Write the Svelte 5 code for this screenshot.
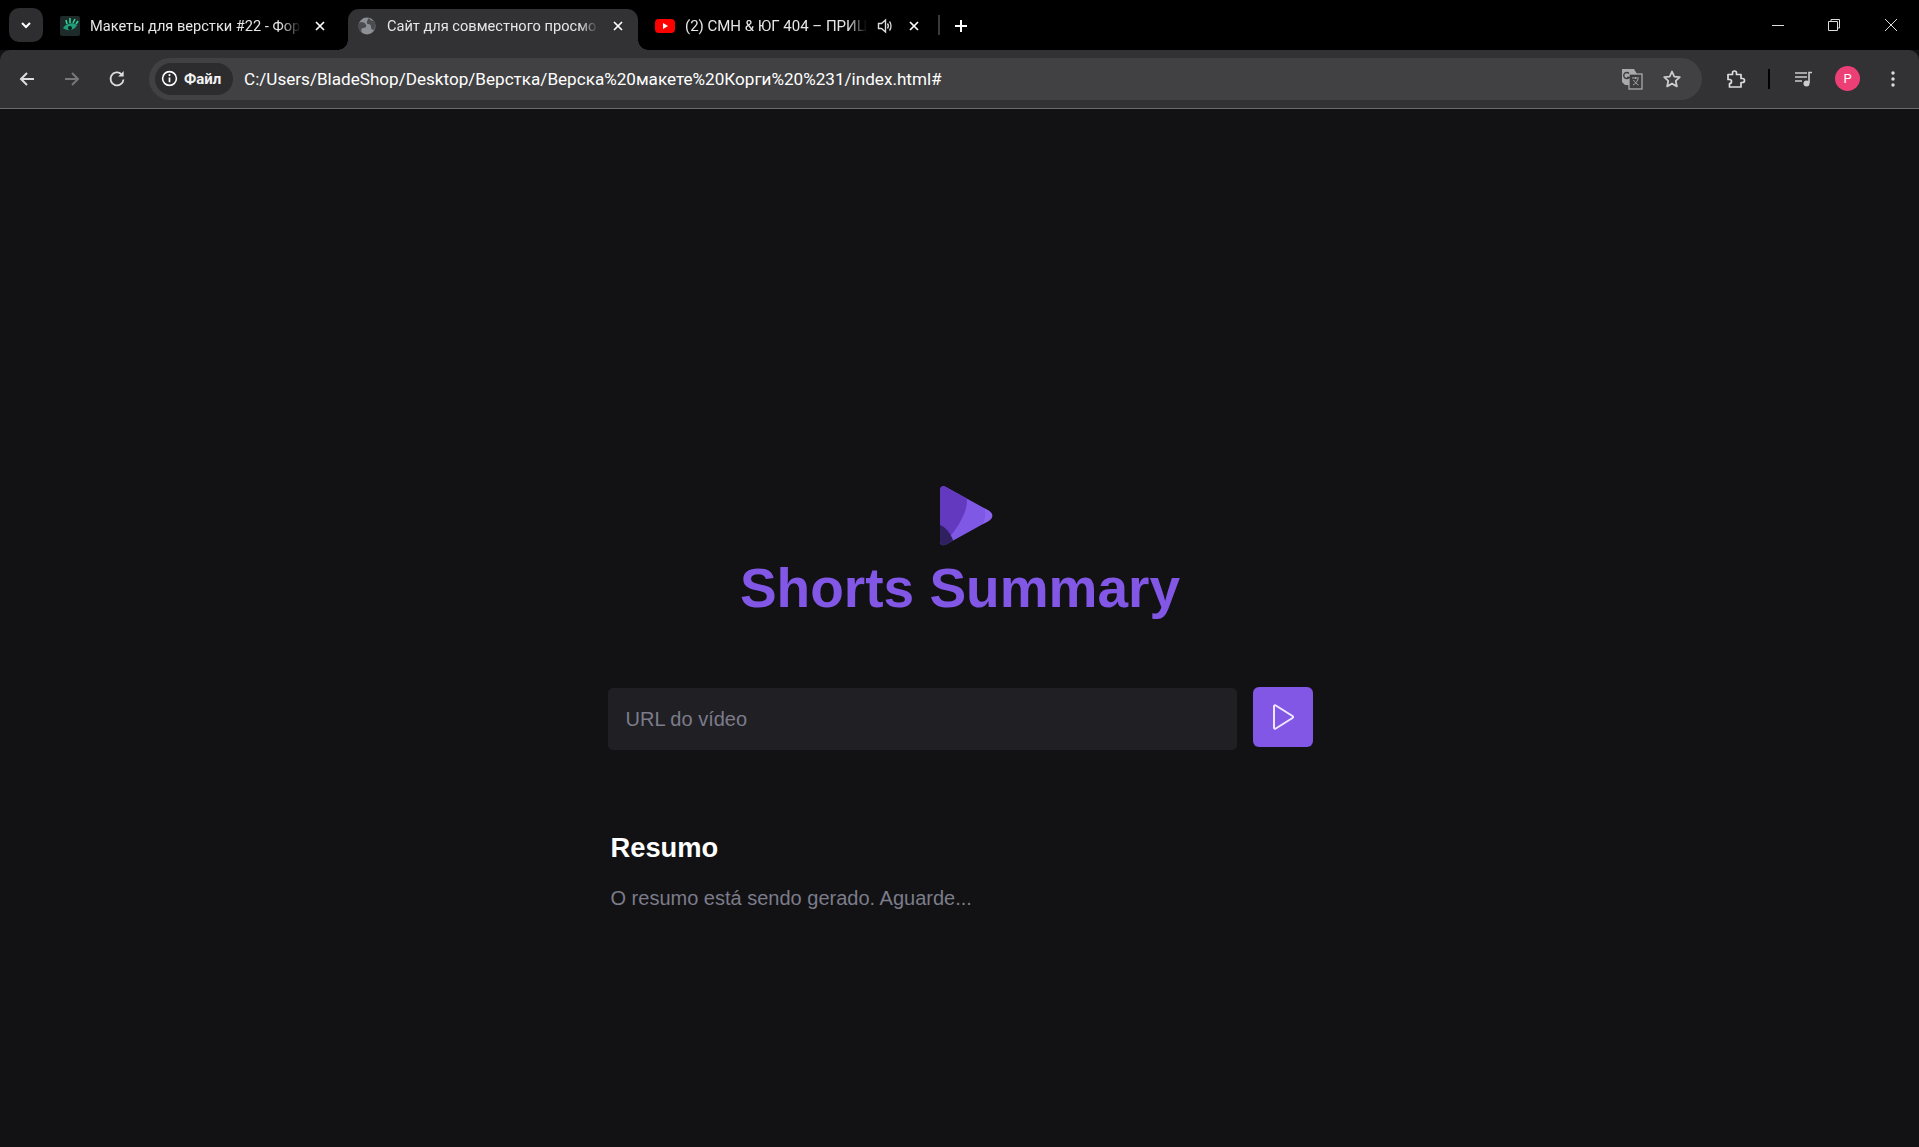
<script>
  let url = $state("");
</script>

<div class="chrome">
  <div class="tabstrip">
    <button class="tab-search" aria-label="Search tabs">
      <svg width="14" height="14" viewBox="0 0 14 14"><path d="M3 5l4 4 4-4" fill="none" stroke="#fff" stroke-width="2"/></svg>
    </button>
    <div class="tab tab-one">
      <svg class="fav" width="20" height="20" viewBox="0 0 20 20">
        <rect width="20" height="20" rx="2" fill="#1e2b2a"/>
        <path d="M3 12c3-5 10-6 14-3-2 5-9 7-14 3z" fill="#1f9c7a"/>
        <path d="M7 8l-1-4M10 7l0-5M13 7l2-4M16 8l2-3" stroke="#2fd29a" stroke-width="1.6"/>
        <circle cx="10" cy="12" r="2" fill="#0c1c1a"/>
      </svg>
      <span class="tab-title">Макеты для верстки #22 - Фор</span>
      <svg class="x" width="12" height="12" viewBox="0 0 12 12"><path d="M2 2l8 8M10 2l-8 8" stroke="#fff" stroke-width="1.7"/></svg>
    </div>
    <div class="tab tab-active">
      <svg class="fav" width="18" height="18" viewBox="0 0 18 18">
        <circle cx="9" cy="9" r="8.5" fill="#8d9094"/>
        <path d="M3 5c3 0 4 1 5 3s-1 3-3 3-2 3-1 5c-2-1-4-4-4-7 0-2 1-3 3-4zM11 1c1 2 3 3 5 3 2 3 1 7 0 9-2 0-3-1-3-3s-1-3-3-3-1-4 1-6z" fill="#4a4c4f"/>
      </svg>
      <span class="tab-title">Сайт для совместного просмо</span>
      <svg class="x" width="12" height="12" viewBox="0 0 12 12"><path d="M2 2l8 8M10 2l-8 8" stroke="#fff" stroke-width="1.7"/></svg>
    </div>
    <div class="tab tab-three">
      <svg class="fav" width="20" height="14" viewBox="0 0 20 14">
        <rect width="20" height="14" rx="4" fill="#f00"/>
        <path d="M8 4l5 3-5 3z" fill="#fff"/>
      </svg>
      <span class="tab-title">(2) СМН &amp; ЮГ 404 – ПРИЦ</span>
      <svg class="speaker" width="16" height="16" viewBox="0 0 16 16">
        <path d="M1.5 5.5h3l4-3.5v12l-4-3.5h-3z" fill="none" stroke="#ddd" stroke-width="1.4"/>
        <path d="M10.5 5.5c1 1.4 1 3.6 0 5M12.5 3.5c2 2.5 2 6.500 0 9" fill="none" stroke="#ddd" stroke-width="1.3"/>
      </svg>
      <svg class="x" width="12" height="12" viewBox="0 0 12 12"><path d="M2 2l8 8M10 2l-8 8" stroke="#fff" stroke-width="1.7"/></svg>
    </div>
    <span class="tab-sep"></span>
    <svg class="plus" width="14" height="14" viewBox="0 0 14 14"><path d="M7 1v12M1 7h12" stroke="#fff" stroke-width="2"/></svg>
    <div class="window-controls">
      <svg width="14" height="14" viewBox="0 0 14 14"><path d="M1 7.500h12" stroke="#ddd"/></svg>
      <svg width="14" height="14" viewBox="0 0 14 14"><path d="M1.500 3.500h9v9h-9zM4 3V1.500h8.500V10H11" fill="none" stroke="#ddd"/></svg>
      <svg class="win-close" width="14" height="14" viewBox="0 0 14 14"><path d="M1 1l12 12M13 1L1 13" stroke="#ddd"/></svg>
    </div>
  </div>

  <div class="toolbar">
    <div class="nav">
      <svg width="18" height="18" viewBox="0 0 18 18"><path d="M16 9H3M9 3L3 9l6 6" fill="none" stroke="#ddd" stroke-width="2"/></svg>
      <svg width="18" height="18" viewBox="0 0 18 18"><path d="M2 9h13M9 3l6 6-6 6" fill="none" stroke="#777" stroke-width="2"/></svg>
      <svg width="18" height="18" viewBox="0 0 18 18"><path d="M15.500 9.500a6.500 6.500 0 1 1-1.900-5.200" fill="none" stroke="#ddd" stroke-width="1.800"/><path d="M15.700 1v5.500h-5.500z" fill="#ddd"/></svg>
    </div>
    <div class="omnibox">
      <div class="chip">
        <svg width="17" height="17" viewBox="0 0 16 16">
          <circle cx="8" cy="8" r="6.500" fill="none" stroke="#fff" stroke-width="1.500"/>
          <path d="M8 7v4.500" stroke="#fff" stroke-width="1.600"/>
          <circle cx="8" cy="4.800" r="1" fill="#fff"/>
        </svg>
        <span>Файл</span>
      </div>
      <span class="url">C:/Users/BladeShop/Desktop/Верстка/Верска%20макете%20Корги%20%231/index.html#</span>
      <svg class="translate" width="22" height="22" viewBox="0 0 22 22">
        <path d="M1 1h12l3 5v11H4l-3-3z" fill="#aaa"/>
        <rect x="8" y="6" width="13" height="15" fill="#3c3c3e" stroke="#aaa" stroke-width="1.300"/>
        <path d="M11 10h7M14.500 9v2M17 11c-1 3-3 5-5 6M12.500 12c1 2 3 4 5 5" fill="none" stroke="#aaa"/>
        <path d="M8 5.500a3 3 0 1 0 0 4h-2" fill="none" stroke="#3c3c3e" stroke-width="1.400"/>
      </svg>
      <svg class="star" width="20" height="20" viewBox="0 0 20 20"><path d="M10 2.500l2.300 5.100 5.500.6-4.100 3.700 1.200 5.500L10 14.600l-4.900 2.800 1.200-5.500-4.100-3.700 5.500-.6z" fill="none" stroke="#ccc" stroke-width="1.800" stroke-linejoin="round"/></svg>
    </div>
    <div class="actions">
      <svg width="20" height="20" viewBox="0 0 20 20"><path d="M2 5.500h4.500V4a2 2 0 0 1 4 0v1.500H15v4h1.500a2 2 0 0 1 0 4H15V18H3.500v-3.500a2 2 0 0 0 0-4H2z" fill="none" stroke="#ddd" stroke-width="1.700" stroke-linejoin="round"/></svg>
      <span class="action-sep"></span>
      <svg width="20" height="18" viewBox="0 0 20 18"><path d="M1 3h12M1 7h12M1 11h7" stroke="#ccc" stroke-width="1.600"/><path d="M15 13V2.500h3" fill="none" stroke="#ccc" stroke-width="1.600"/><circle cx="12.500" cy="13.500" r="3" fill="#ccc"/></svg>
      <span class="avatar">P</span>
      <svg class="menu" width="6" height="18" viewBox="0 0 6 18"><circle cx="3" cy="3" r="1.700" fill="#ddd"/><circle cx="3" cy="9" r="1.700" fill="#ddd"/><circle cx="3" cy="15" r="1.700" fill="#ddd"/></svg>
    </div>
  </div>
</div>

<main class="page">
  <div class="content">
    <header class="brand">
      <svg class="logo" width="54" height="60" viewBox="0 0 54 60">
        <defs>
          <clipPath id="tri">
            <path d="M0 4C0 .8 2.500-.7 5 .6L48.500 24.500C53.500 27.500 53.500 32 48.500 35L6 58.500c-2.800 1.700-6 .8-6-3z"/>
          </clipPath>
        </defs>
        <g clip-path="url(#tri)">
          <rect width="54" height="60" fill="#7f58e6"/>
          <path d="M43 18c3 5 3 12 0 20l14-4V22z" fill="#8a63ef"/>
          <path d="M0 0h24c4 9 4 19 0 28-3 7-7 14-12 20L0 60z" fill="#6339c0"/>
          <path d="M0 39c7 3 12 10 15 21H0z" fill="#2f2060"/>
        </g>
      </svg>
      <h1>Shorts Summary</h1>
    </header>

    <form class="url-form" onsubmit={(e) => e.preventDefault()}>
      <input type="text" placeholder="URL do vídeo" bind:value={url} />
      <button type="submit" aria-label="Enviar">
        <svg width="24" height="28" viewBox="0 0 24 28"><path d="M3 3.500c0-1 1-1.500 1.800-1L21.500 13c.8.500.8 1.500 0 2L4.800 25.500c-.8.500-1.800 0-1.800-1z" fill="none" stroke="#f0e8ff" stroke-width="2" stroke-linejoin="round"/></svg>
      </button>
    </form>

    <section class="summary">
      <h2>Resumo</h2>
      <p>O resumo está sendo gerado. Aguarde...</p>
    </section>
  </div>
</main>

<style>
  :global(body) {
    margin: 0;
    background: #121214;
    font-family: "Liberation Sans", Arial, sans-serif;
  }

  .chrome {
    font-family: Roboto, "Noto Sans", sans-serif;
    color: #e6e6e6;
  }

  .tabstrip {
    display: flex;
    align-items: flex-end;
    height: 50px;
    background: #000;
  }

  .tab-search {
    width: 34px;
    height: 34px;
    margin: 0 8px 8px 9px;
    padding: 0;
    display: flex;
    align-items: center;
    justify-content: center;
    background: #2e2e30;
    border: 0;
    border-radius: 10px;
  }

  .tab {
    display: flex;
    align-items: center;
    flex: none;
    height: 41px;
    padding-bottom: 8px;
    box-sizing: border-box;
    font-size: 14.600px;
  }

  .tab-one {
    width: 297px;
    padding-left: 9px;
    padding-right: 22px;
  }

  .tab-one .fav {
    margin-right: 10px;
    flex: none;
  }

  .tab-active {
    position: relative;
    width: 290px;
    padding-left: 10px;
    padding-right: 14px;
    background: #323234;
    border-radius: 11px 11px 0 0;
  }

  /* little flared feet where the active tab meets the toolbar */
  .tab-active::before,
  .tab-active::after {
    content: "";
    position: absolute;
    bottom: 0;
    width: 10px;
    height: 10px;
  }

  .tab-active::before {
    left: -10px;
    background: radial-gradient(circle at 0 0, #000 9.500px, #323234 10px);
  }

  .tab-active::after {
    right: -10px;
    background: radial-gradient(circle at 100% 0, #000 9.500px, #323234 10px);
  }

  .tab-active .fav {
    margin-right: 11px;
    flex: none;
  }

  .tab-three {
    width: 300px;
    padding-left: 17px;
    padding-right: 18px;
    font-size: 15px;
  }

  .tab-three .fav {
    margin-right: 10px;
    flex: none;
  }

  .tab-title {
    flex: 1;
    min-width: 0;
    white-space: nowrap;
    overflow: hidden;
    mask-image: linear-gradient(to left, transparent 0, #000 20px);
  }

  .tab-one .tab-title,
  .tab-active .tab-title {
    margin-right: 13px;
  }

  .tab-three .tab-title {
    margin-right: 10px;
  }

  .speaker {
    margin-right: 15px;
    flex: none;
  }

  .x {
    flex: none;
  }

  .tab-sep {
    width: 2px;
    height: 20px;
    background: #3a3a3a;
    margin: 0 0 15px 0;
  }

  .plus {
    margin: 0 0 17px 14px;
  }

  .window-controls {
    margin-left: auto;
    display: flex;
    gap: 42px;
    padding: 0 21px 18px 0;
  }

  .win-close {
    margin-left: 1px;
  }

  .toolbar {
    height: 59px;
    box-sizing: border-box;
    display: flex;
    align-items: center;
    background: #323234;
    border-bottom: 1px solid #6a6a6a;
    border-radius: 10px 10px 0 0;
    padding: 0 0 1px 18px;
  }

  .nav {
    display: flex;
    gap: 27px;
    flex: none;
  }

  .omnibox {
    flex: none;
    width: 1553px;
    height: 42px;
    margin-left: 23px;
    display: flex;
    align-items: center;
    background: #414143;
    border-radius: 21px;
  }

  .chip {
    display: flex;
    align-items: center;
    gap: 6px;
    height: 32px;
    width: 78px;
    box-sizing: border-box;
    margin-left: 6px;
    padding-left: 6px;
    background: #2c2c2e;
    border-radius: 16px;
    font-size: 15px;
    font-weight: 700;
    color: #f2f2f2;
  }

  .url {
    margin-left: 11px;
    font-size: 17.100px;
    color: #fff;
    white-space: nowrap;
  }

  .translate {
    margin-left: auto;
  }

  .star {
    margin: 0 20px 0 19px;
  }

  .actions {
    display: flex;
    align-items: center;
    margin-left: 24px;
    flex: none;
  }

  .action-sep {
    width: 2px;
    height: 20px;
    background: #000;
    margin: 0 24px 0 22px;
  }

  .avatar {
    width: 25px;
    height: 25px;
    margin: 0 30px 0 21px;
    border-radius: 50%;
    background: #ec3f75;
    color: #fff;
    font-size: 13px;
    display: flex;
    align-items: center;
    justify-content: center;
  }

  .page {
    height: 1038px;
    overflow: hidden;
    box-sizing: border-box;
    padding: 377px 0 0 1px;
    display: flex;
    justify-content: center;
    background: #121214;
  }

  .content {
    width: 705px;
  }

  .brand {
    display: flex;
    flex-direction: column;
    align-items: center;
  }

  .logo {
    margin-left: 14px;
    display: block;
  }

  h1 {
    margin: 9px 0 0;
    font-size: 55px;
    line-height: 66px;
    font-weight: 700;
    color: #8257e5;
  }

  .url-form {
    display: flex;
    align-items: flex-start;
    gap: 16px;
    margin-top: 66px;
  }

  input {
    flex: 1;
    min-width: 0;
    height: 62px;
    box-sizing: border-box;
    padding: 0 18px;
    margin-top: 1px;
    background: #202024;
    border: 0;
    border-radius: 5px;
    outline: none;
    color: #e1e1e6;
    font: inherit;
    font-size: 20px;
  }

  input::placeholder {
    color: #7c7c8a;
    opacity: 1;
  }

  .url-form button {
    flex: none;
    width: 60px;
    height: 60px;
    padding: 0;
    display: flex;
    align-items: center;
    justify-content: center;
    background: #8257e5;
    border: 0;
    border-radius: 6px;
  }

  .summary {
    margin-top: 80px;
    padding-left: 3px;
  }

  h2 {
    margin: 0;
    font-size: 27.300px;
    line-height: 36px;
    font-weight: 700;
    color: #fff;
  }

  p {
    margin: 18px 0 0;
    font-size: 20px;
    line-height: 28px;
    color: #7c7c8a;
  }
</style>
